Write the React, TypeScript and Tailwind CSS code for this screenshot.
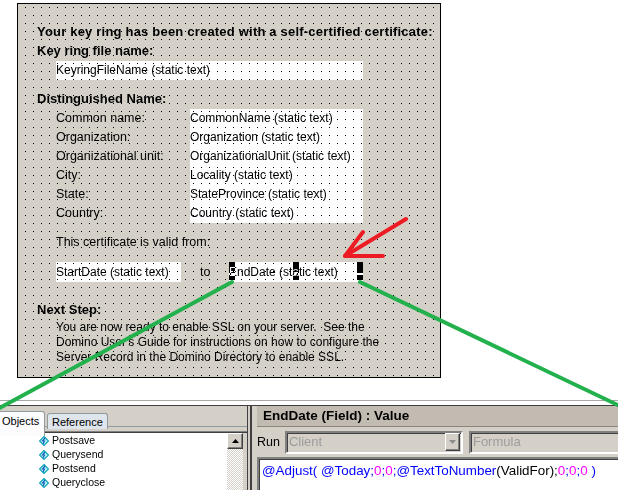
import React from "react";

const dnRows = [
  ["Common name:", "CommonName (static text)"],
  ["Organization:", "Organization (static text)"],
  ["Organizational unit:", "OrganizationalUnit (static text)"],
  ["City:", "Locality (static text)"],
  ["State:", "StateProvince (static text)"],
  ["Country:", "Country (static text)"],
];

const events = ["Postsave", "Querysend", "Postsend", "Queryclose"];

const Handle: React.FC<{ className: string }> = ({ className }) => (
  <div className={`absolute top-0 flex w-[6px] flex-col gap-[2px] ${className}`}>
    <div className="h-[11px] bg-white mix-blend-difference" />
    <div className="h-[5px] bg-white mix-blend-difference" />
  </div>
);

const EventIcon = () => (
  <svg width="10" height="10" viewBox="0 0 10 10" className="shrink-0">
    <path d="M5 0.5 L9.5 5 L5 9.5 L0.5 5 Z" fill="#bff4f4" stroke="#0fa3b8" strokeWidth="1.2" />
    <path d="M6 2 L3.5 5 L5.5 5 L4 8" fill="none" stroke="#1060c0" strokeWidth="1.2" />
  </svg>
);

const FormPanel = () => (
  <div className="relative ml-[17px] mt-[3px] h-[375px] w-[424px] border border-black bg-[#d4d0c8] text-[12.5px] text-black">
    <div className="pl-[19px] pt-[20px]">
      <div className="h-4 whitespace-nowrap text-[13px] font-bold leading-4 tracking-[0.2px]">
        Your key ring has been created with a self-certified certificate:
      </div>
      <div className="mt-[3px] h-4 text-[13px] font-bold leading-4">Key ring file name:</div>
      <div className="ml-[19px] mt-[2px] h-[19px] w-[307px] bg-white text-[12px] leading-[19px]">
        KeyringFileName (static text)
      </div>
      <div className="mt-[11px] h-4 text-[13px] font-bold leading-4">Distinguished Name:</div>
      <div className="ml-[19px] mt-[2px] flex flex-col">
        {dnRows.map(([label, value]) => (
          <div key={label} className="flex h-[19px] leading-[19px]">
            <div className="w-[134px] whitespace-nowrap">{label}</div>
            <div className="w-[173px] whitespace-nowrap bg-white text-[12px]">{value}</div>
          </div>
        ))}
      </div>
      <div className="ml-[19px] mt-[11px] h-4 leading-4">This certificate is valid from:</div>
      <div className="ml-[19px] mt-[12px] flex h-5 text-[12px] leading-5">
        <div className="w-[125px] whitespace-nowrap bg-white">StartDate (static text)</div>
        <div className="ml-[19px] w-[29px] text-[12.5px]">to</div>
        <div className="relative w-[134px] whitespace-nowrap bg-white">
          EndDate (static text)
          <Handle className="left-0" />
          <Handle className="left-[64px]" />
          <Handle className="right-0" />
        </div>
      </div>
      <div className="mt-5 h-4 text-[13px] font-bold leading-4">Next Step:</div>
      <div className="ml-[19px] mt-[2px] whitespace-pre text-[12px] leading-[15px]">
        <div>You are now ready to enable SSL on your server.  See the</div>
        <div>Domino User's Guide for instructions on how to configure the</div>
        <div>Server Record in the Domino Directory to enable SSL.</div>
      </div>
    </div>
    <div className="pointer-events-none absolute inset-0 bg-[image:conic-gradient(at_1px_1px,transparent_75%,#000_0)] bg-[size:8px_8px] bg-[position:7px_3px]" />
  </div>
);

const ObjectsPane = () => (
  <div className="flex w-[247px] flex-col bg-[#d4d0c8]">
    <div className="relative h-[23px] border-b border-[#919b9c]">
      <div className="absolute left-[-3px] top-[5px] z-10 h-[25px] w-[48px] rounded-tr-[3px] border border-b-0 border-[#919b9c] bg-[#fcfcfe] pl-[4px] text-[11px] leading-[18px]">
        Objects
      </div>
      <div className="absolute left-[47px] top-[7px] h-[16px] w-[61px] rounded-t-[3px] border border-b-0 border-[#919b9c] bg-[#dfe5ec] pl-[4px] text-[11px] leading-[16px]">
        Reference
      </div>
    </div>
    <div className="mt-[4px] flex flex-1 border-t border-[#808080]">
      <div className="flex flex-1 border-t border-[#404040]">
        <div className="flex-1 bg-white pt-[1px] text-[10.5px]">
          {events.map((e) => (
            <div key={e} className="flex h-[14px] items-center gap-[3px] pl-[39px]">
              <EventIcon />
              <span>{e}</span>
            </div>
          ))}
        </div>
        <div className="flex w-[16px] flex-col bg-[image:repeating-conic-gradient(#d4d0c8_0_25%,#ffffff_0_50%)] bg-[size:2px_2px]">
          <div className="flex h-[16px] items-center justify-center border border-b-[#404040] border-l-white border-r-[#404040] border-t-white bg-[#d4d0c8] shadow-[inset_-1px_-1px_0_#808080]">
            <svg width="7" height="4" viewBox="0 0 7 4">
              <path d="M3.5 0 L7 4 L0 4 Z" fill="#000" />
            </svg>
          </div>
        </div>
        <div className="w-[4px] bg-[#d4d0c8]" />
      </div>
    </div>
  </div>
);

const FormulaPane = () => (
  <div className="flex flex-1 flex-col bg-[#d4d0c8] pl-[5px]">
    <div className="h-[21px] border-b border-[#8d857c] bg-[#c2bbb2] pl-[6px] text-[13.5px] font-bold leading-[20px]">
      EndDate (Field) : Value
    </div>
    <div className="flex h-[30px] items-center text-[12.5px]">
      <span>Run</span>
      <div className="ml-[5px] flex h-[23px] w-[178px] items-center border-2 border-b-white border-l-[#808080] border-r-white border-t-[#808080] bg-[#d4d0c8] shadow-[inset_1px_1px_0_#404040]">
        <span className="flex-1 pl-[2px] text-[13px] text-[#9c9c9c]">Client</span>
        <div className="mr-[1px] flex h-[18px] w-[15px] items-center justify-center border border-b-[#404040] border-l-white border-r-[#404040] border-t-white shadow-[inset_-1px_-1px_0_#808080]">
          <svg width="7" height="4" viewBox="0 0 7 4">
            <path d="M0 0 L7 0 L3.5 4 Z" fill="#8c8c8c" />
          </svg>
        </div>
      </div>
      <div className="ml-[6px] flex h-[23px] flex-1 items-center border-2 border-r-0 border-b-white border-l-[#808080] border-t-[#808080] bg-[#d4d0c8] shadow-[inset_1px_1px_0_#404040]">
        <span className="pl-[2px] text-[13px] text-[#9c9c9c]">Formula</span>
      </div>
    </div>
    <div className="flex-1 whitespace-pre border-l-2 border-t-2 border-l-[#808080] border-t-[#808080] bg-white pl-[3px] pt-[4px] text-[13.4px] leading-4 shadow-[inset_1px_1px_0_#404040]">
      <span className="text-[#0000ff]">@Adjust( @Today;</span>
      <span className="text-[#ff00ff]">0</span>
      <span className="text-[#0000ff]">;</span>
      <span className="text-[#ff00ff]">0</span>
      <span className="text-[#0000ff]">;@TextToNumber</span>
      <span className="text-black">(ValidFor);</span>
      <span className="text-[#ff00ff]">0</span>
      <span className="text-[#0000ff]">;</span>
      <span className="text-[#ff00ff]">0</span>
      <span className="text-[#0000ff]">;</span>
      <span className="text-[#ff00ff]">0</span>
      <span className="text-[#0000ff]"> )</span>
    </div>
  </div>
);

export default function App() {
  return (
    <div className="relative h-[490px] w-[618px] overflow-hidden bg-white font-['Liberation_Sans',Arial,sans-serif] text-black">
      <FormPanel />
      <div className="mt-[22px] border-t border-[#a8a8a8]">
        <div className="h-[4px] bg-white" />
        <div className="flex h-[85px] border-t border-[#404040]">
          <ObjectsPane />
          <div className="w-[1px] bg-[#404040]" />
          <div className="w-[2px] bg-[#d4d0c8]" />
          <div className="w-[2px] bg-[#404040]" />
          <FormulaPane />
        </div>
      </div>
      <svg
        className="pointer-events-none absolute inset-0"
        width="618"
        height="490"
        viewBox="0 0 618 490"
      >
        <g stroke="#22b14c" strokeWidth="4" strokeLinecap="round" fill="none">
          <line x1="232" y1="282" x2="-4" y2="410" />
          <line x1="360" y1="282" x2="622" y2="407" />
        </g>
        <g stroke="#ed1c24" strokeWidth="4" strokeLinecap="round" strokeLinejoin="round" fill="none">
          <line x1="406" y1="219" x2="345" y2="256" />
          <polyline points="363,232 345,256 383,256" />
        </g>
      </svg>
    </div>
  );
}
